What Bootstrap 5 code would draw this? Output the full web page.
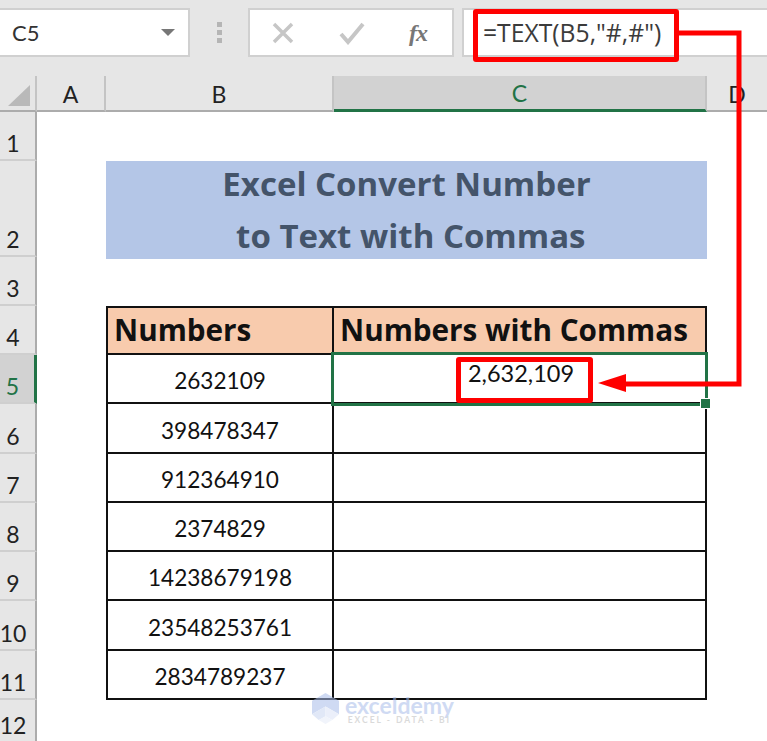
<!DOCTYPE html>
<html lang="en"><head><meta charset="utf-8"><title>Excel Convert Number to Text with Commas</title>
<link href="https://cdn.jsdelivr.net/npm/bootstrap@5.3.0/dist/css/bootstrap.min.css" rel="stylesheet">
<style>
html,body{margin:0;background:#fff;overflow:hidden}
.xl-page{position:relative;width:767px;height:741px;overflow:hidden;font-family:Lato,"Liberation Sans",sans-serif;color:#111}
.xl-bar{height:76px;background:#e6e6e6;padding-top:8px;align-items:flex-start}
.xl-box{height:49px;background:#fff;border:2px solid #d0d0d0;color:#333}
.xl-name{width:191px;margin-left:-1px;padding:0 13px;font-size:22px;border-left:0}
.xl-tri{width:0;height:0;border-left:7px solid transparent;border-right:7px solid transparent;border-top:7px solid #777}
.xl-dots{width:58px;height:49px;gap:3px}
.xl-dots i{display:block;width:5px;height:5px;background:#b5b5b5}
.xl-btns{width:206px;padding:0 25px 0 21px}
.xl-formula{flex:1;margin-left:8px;margin-right:-4px;padding-left:19px;font-family:"Open Sans","Liberation Sans",sans-serif;font-size:24.7px;color:#3b3b3b}
.xl-fx{font-family:"Liberation Serif",serif;font-style:italic;font-weight:700;font-size:24px;color:#777;letter-spacing:-1px}
.xl-grid{display:grid;grid-template-columns:37px 69px 228px 373px 60px;grid-template-rows:36px 49px 96px 49px 49px repeat(7,49.3px) 43px}
.xl-hd{background:#e6e6e6;border-bottom:2px solid #acacac;border-right:2px solid #c4c4c4;display:flex;align-items:center;justify-content:center;font-size:23px;color:#222;padding-top:2px}
.xl-hd.xl-on{background:#d2d2d2;border-bottom:3px solid #217346;color:#217346}
.xl-hd.xl-none{border-right:0}
.xl-rh{background:#e6e6e6;border-right:2px solid #acacac;border-bottom:2px solid #cfcfcf;display:flex;align-items:flex-end;justify-content:center;font-size:23px;line-height:1;color:#222;padding:0 9px 4px 0}
.xl-rh.xl-on{background:#d2d2d2;border-right:3px solid #217346;color:#217346}
.xl-corner{position:relative}
.xl-corner svg{position:absolute;left:8px;top:8px}
.xl-cell{background:#fff}
.xl-banner{grid-column:3/span 2;background:#b4c6e7;color:#44546a;font-family:"Open Sans","Liberation Sans",sans-serif;font-weight:700;font-size:33px;line-height:52px;text-align:center;margin:0 0 -2px;position:relative;z-index:1}
.xl-banner span{display:block;margin-top:-3px}
.xl-tc{border-right:2px solid #111;border-bottom:2px solid #111;display:flex;align-items:center;justify-content:center;font-size:22.6px;color:#111;padding-top:5px}
.xl-tc.xl-first{border-left:2px solid #111}
.xl-th{background:#f8cbad;border-top:2px solid #111;font-family:"Open Sans","Liberation Sans",sans-serif;font-weight:700;font-size:29.7px;justify-content:flex-start;padding:0 0 0 6px;white-space:nowrap}
.xl-tv{padding:0 0 10px 3px;font-size:23.5px}
.xl-wm{position:absolute;left:312px;top:693px;display:flex;gap:6px;align-items:flex-start;opacity:.55}
.xl-wmt{color:#a9bdea;font-size:23px;font-weight:700;line-height:20px;margin-top:2px}
.xl-wms{color:#bdbdbd;font-size:8.5px;line-height:9px;letter-spacing:2px;text-align:center;font-weight:700;margin-top:1px}
.xl-mark{position:absolute;border:5px solid #f00;border-radius:3px}
.xl-m1{left:473px;top:9px;width:206px;height:53px}
.xl-m2{left:456px;top:357px;width:137px;height:46px}
.xl-sel{position:absolute;left:331px;top:352px;width:377px;height:54px;border:3px solid #217346}
.xl-handle{position:absolute;left:700px;top:398px;width:11px;height:11px;background:#217346;border:1px solid #fff}
.xl-over{position:absolute;left:0;top:0;pointer-events:none}
</style></head><body>
<div class="xl-page">
  <div class="xl-bar d-flex">
    <div class="xl-box xl-name d-flex align-items-center justify-content-between"><span>C5</span><span class="xl-tri"></span></div>
    <div class="xl-dots d-flex flex-column align-items-center justify-content-center"><i></i><i></i><i></i></div>
    <div class="xl-box xl-btns d-flex align-items-center justify-content-between">
      <svg width="24" height="24" viewBox="0 0 24 24"><path d="M3 3 21 21M21 3 3 21" stroke="#c6c6c6" stroke-width="3.5"/></svg>
      <svg width="26" height="24" viewBox="0 0 26 24"><path d="M2 13 9 21 24 3" fill="none" stroke="#c6c6c6" stroke-width="4"/></svg>
      <span class="xl-fx">fx</span>
    </div>
    <div class="xl-box xl-formula d-flex align-items-center">=TEXT(B5,"#,#")</div>
  </div>
  <div class="xl-grid">
    <div class="xl-hd xl-corner"><svg width="24" height="24" viewBox="0 0 24 24"><path d="M22 1V22H0Z" fill="#b9b9b9"/></svg></div>
    <div class="xl-hd">A</div><div class="xl-hd">B</div><div class="xl-hd xl-on">C</div><div class="xl-hd xl-none">D</div>

    <div class="xl-rh">1</div><div class="xl-cell" style="grid-column:2/-1"></div>

    <div class="xl-rh">2</div><div class="xl-cell"></div><h1 class="xl-banner"><span>Excel Convert Number<br>&nbsp;to Text with Commas</span></h1><div class="xl-cell"></div>

    <div class="xl-rh">3</div><div class="xl-cell" style="grid-column:2/-1"></div>

    <div class="xl-rh">4</div><div class="xl-cell"></div><div class="xl-tc xl-first xl-th">Numbers</div><div class="xl-tc xl-th">Numbers with Commas</div><div class="xl-cell"></div>

    <div class="xl-rh xl-on">5</div><div class="xl-cell"></div><div class="xl-tc xl-first">2632109</div><div class="xl-tc xl-tv">2,632,109</div><div class="xl-cell"></div>
    <div class="xl-rh">6</div><div class="xl-cell"></div><div class="xl-tc xl-first">398478347</div><div class="xl-tc"></div><div class="xl-cell"></div>
    <div class="xl-rh">7</div><div class="xl-cell"></div><div class="xl-tc xl-first">912364910</div><div class="xl-tc"></div><div class="xl-cell"></div>
    <div class="xl-rh">8</div><div class="xl-cell"></div><div class="xl-tc xl-first">2374829</div><div class="xl-tc"></div><div class="xl-cell"></div>
    <div class="xl-rh">9</div><div class="xl-cell"></div><div class="xl-tc xl-first">14238679198</div><div class="xl-tc"></div><div class="xl-cell"></div>
    <div class="xl-rh">10</div><div class="xl-cell"></div><div class="xl-tc xl-first">23548253761</div><div class="xl-tc"></div><div class="xl-cell"></div>
    <div class="xl-rh">11</div><div class="xl-cell"></div><div class="xl-tc xl-first">2834789237</div><div class="xl-tc"></div><div class="xl-cell"></div>
    <div class="xl-rh">12</div><div class="xl-cell" style="grid-column:2/-1"></div>
  </div>
  <div class="xl-sel"></div><div class="xl-handle"></div>
  <div class="xl-mark xl-m1"></div><div class="xl-mark xl-m2"></div>
  <svg class="xl-over" width="767" height="741" viewBox="0 0 767 741">
    <path d="M679 33H739V384H612" fill="none" stroke="#f00" stroke-width="5"/>
    <path d="M598 383 626 374V392Z" fill="#f00"/>
  </svg>
  <div class="xl-wm">
    <svg width="27" height="31" viewBox="0 0 28 32"><path d="M14 0 28 8V22L14 14 0 22V8Z" fill="#a9bdea"/><path d="M0 22 14 14V24L7 28Z" fill="#c9d6f2"/><path d="M28 22 14 14V24L21 28Z" fill="#dbe3f6"/><path d="M7 28 14 24 21 28 14 32Z" fill="#e6ecf9"/></svg>
    <div><div class="xl-wmt">exceldemy</div><div class="xl-wms">EXCEL - DATA - BI</div></div>
  </div>
</div>
</body></html>
